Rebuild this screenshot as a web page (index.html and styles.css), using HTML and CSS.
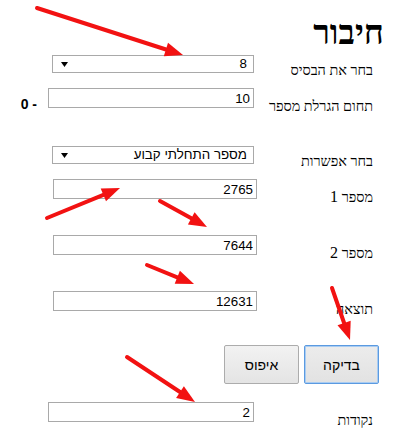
FILE: index.html
```html
<!DOCTYPE html>
<html lang="he" dir="rtl">
<head>
<meta charset="utf-8">
<title>חיבור</title>
<link rel="stylesheet" href="styles.css">
</head>
<body>
<h1 class="title">חיבור</h1>
<div class="page">
  <div class="row sel">
    <div class="label">בחר את הבסיס</div>
    <div class="select w202"><span class="sel-text">8</span><svg class="caret" width="7" height="5" viewBox="0 0 7 5"><polygon points="0,0 7,0 3.5,5" fill="#000"/></svg></div>
  </div>

  <div class="row gap-s">
    <div class="label">תחום הגרלת מספר</div>
    <input class="field w206" type="text" value="10">
    <span class="range" dir="ltr">0 -</span>
  </div>

  <div class="row sel gap-xl">
    <div class="label">בחר אפשרות</div>
    <div class="select w202"><span class="sel-text">מספר התחלתי קבוע</span><svg class="caret" width="7" height="5" viewBox="0 0 7 5"><polygon points="0,0 7,0 3.5,5" fill="#000"/></svg></div>
  </div>

  <div class="row wide gap-s">
    <div class="label">מספר <span class="num">1</span></div>
    <input class="field w204" type="text" value="2765">
  </div>

  <div class="row wide gap-l">
    <div class="label">מספר <span class="num">2</span></div>
    <input class="field w204" type="text" value="7644">
  </div>

  <div class="row wide gap-l">
    <div class="label">תוצאה</div>
    <input class="field w204" type="text" value="12631">
  </div>

  <div class="buttons">
    <button class="btn focused" type="button">בדיקה</button>
    <button class="btn" type="button">איפוס</button>
  </div>

  <div class="row gap-m">
    <div class="label">נקודות</div>
    <input class="field w206" type="text" value="2">
  </div>
</div>

<svg class="arrows" width="403" height="445" viewBox="0 0 403 445">
  <g stroke="#f21212" stroke-width="4" stroke-linecap="round" fill="none">
    <line x1="37" y1="8" x2="166" y2="49.5"/>
    <line x1="47" y1="218" x2="103.4" y2="194.8"/>
    <line x1="160" y1="201" x2="191.3" y2="218.3"/>
    <line x1="147" y1="265" x2="177.3" y2="277.3"/>
    <line x1="332" y1="288" x2="344.1" y2="323"/>
    <line x1="127" y1="357" x2="180" y2="392"/>
  </g>
  <g fill="#f21212">
    <polygon points="183,55 163.8,56.2 168,42.8"/>
    <polygon points="120,188 106,201.3 100.7,188.4"/>
    <polygon points="207,227 187.9,224.4 194.6,212.2"/>
    <polygon points="194,284 174.7,283.7 179.9,270.8"/>
    <polygon points="350,340 337.5,325.3 350.7,320.7"/>
    <polygon points="195,402 176.1,397.9 183.9,386.2"/>
  </g>
</svg>
</body>
</html>
```
FILE: styles.css
```css
html, body {
  margin: 0;
  padding: 0;
  background: #ffffff;
}

body {
  direction: rtl;
  font-family: "Liberation Serif", "Tinos", "Noto Serif Hebrew", "FreeSerif", "Frank Ruehl CLM", "DejaVu Serif", serif;
  color: #000;
  position: relative;
  width: 403px;
  height: 445px;
  overflow: hidden;
}

.title {
  font-size: 34px;
  font-weight: bold;
  line-height: 36px;
  margin: 0;
  padding: 15px 19px 0 0;
  height: 35px;
}

.page {
  padding-top: 5px;
  padding-right: 30px;
}

.row {
  display: flex;
  align-items: flex-start;
}

.label {
  flex: none;
  width: 119px;
  font-size: 14.4px;
  line-height: 18px;
  padding-top: 9px;
  margin-bottom: -2px;
  white-space: nowrap;
}

.num {
  font-family: "Liberation Serif", "Times New Roman", serif;
  font-size: 16px;
}

.row.sel .label {
  padding-top: 6px;
  margin-bottom: -1px;
}

.row.wide .label {
  width: 116px;
}

.gap-s { margin-top: 10px; }
.gap-m { margin-top: 18px; }
.gap-l { margin-top: 31px; }
.gap-xl { margin-top: 32px; }

.field {
  flex: none;
  box-sizing: border-box;
  height: 20px;
  margin: 0;
  border: 1px solid #a9a9a9;
  padding: 0 3px;
  font-family: "Liberation Sans", Arial, "DejaVu Sans", sans-serif;
  font-size: 13.33px;
  color: #000;
  text-align: right;
  direction: rtl;
  background: #fff;
  outline: none;
}

.w204 { width: 204px; }
.w206 { width: 206px; }
.w202 { width: 202px; }

.select {
  flex: none;
  box-sizing: border-box;
  height: 18px;
  border: 1px solid #a9a9a9;
  background: #fff;
  display: flex;
  align-items: center;
  justify-content: space-between;
  padding: 0 6px 0 8px;
  font-family: "Liberation Sans", Arial, "DejaVu Sans", sans-serif;
  font-size: 13.33px;
  line-height: 16px;
}

.caret {
  display: block;
  flex: none;
}

.range {
  flex: none;
  margin-right: 11px;
  padding-top: 6px;
  font-family: "Liberation Sans", Arial, "DejaVu Sans", sans-serif;
  font-weight: bold;
  font-size: 14px;
  line-height: 20px;
}

.buttons {
  display: flex;
  gap: 5px;
  margin-top: 29px;
  margin-right: -6px;
}

.btn {
  box-sizing: border-box;
  width: 75px;
  height: 39px;
  margin: 0;
  border: 1px solid #acacac;
  border-radius: 2px;
  background: linear-gradient(#f2f2f2, #e4e4e4);
  font-family: "Liberation Sans", Arial, "DejaVu Sans", sans-serif;
  font-size: 14px;
  color: #000;
  padding: 0;
}

.btn.focused {
  border: 1px solid #5b9ae0;
  box-shadow: inset 0 0 0 1px #a9ccf2;
  background: linear-gradient(#ececec, #e2e2e2);
}

.arrows {
  position: absolute;
  top: 0;
  left: 0;
  pointer-events: none;
}
```
